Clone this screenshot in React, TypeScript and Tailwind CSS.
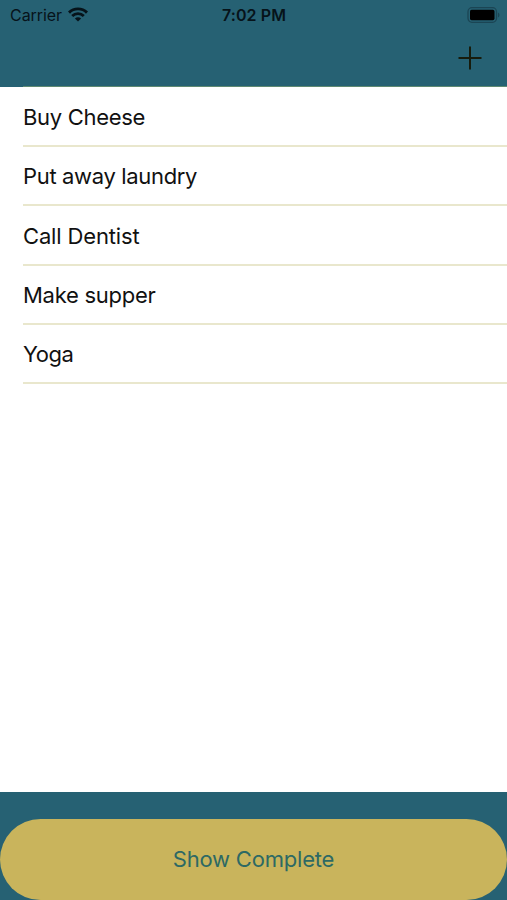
const todos = [
  { title: "Buy Cheese", row: "h-[60px]", tracking: "tracking-[-0.3px]" },
  { title: "Put away laundry", row: "h-[59px]", tracking: "tracking-[-0.34px]" },
  { title: "Call Dentist", row: "h-[60px]", tracking: "tracking-[-0.15px]" },
  { title: "Make supper", row: "h-[59px]", tracking: "tracking-[-0.27px]" },
  { title: "Yoga", row: "h-[59px]", tracking: "tracking-[-0.5px]" },
];

function WifiIcon() {
  return (
    <svg className="-mt-px" width="20" height="15" viewBox="0 0 20 15" fill="none" stroke="#06131a" strokeWidth="2.9">
      <path d="M1 5.6C6 .6 14 .6 19 5.6" />
      <path d="M4.2 9C7.5 5.8 12.5 5.8 15.8 9" />
      <path d="M10 14.6 6.9 11.5C8.7 9.9 11.3 9.9 13.1 11.5Z" fill="#06131a" stroke="none" />
    </svg>
  );
}

function BatteryIcon() {
  return (
    <svg className="-mt-px" width="33" height="16" viewBox="0 0 33 16">
      <rect x="1" y="0.7" width="28.5" height="14.6" rx="4" fill="none" stroke="#1b4554" strokeWidth="1.3" />
      <rect x="3" y="2.8" width="24.5" height="10.4" rx="1.6" fill="#000" />
      <path d="M31 5.5q1.5.8 1.5 2.5t-1.5 2.5z" fill="#1b4554" />
    </svg>
  );
}

export default function App() {
  return (
    <div className="flex h-[900px] w-[507px] flex-col overflow-hidden bg-white font-['Inter','Liberation_Sans',sans-serif]">
      <header className="h-[87px] bg-[#266173] text-[#06131a]">
        <div className="grid h-[29px] grid-cols-3 items-center pr-[7px] pl-[10px]">
          <div className="flex items-center gap-[6px]">
            <span className="pt-px text-[16px] leading-[29px] tracking-[-0.05px]">Carrier</span>
            <WifiIcon />
          </div>
          <span className="pt-px pr-[2px] text-center text-[16px] leading-[29px] font-semibold tracking-[0.1px] whitespace-nowrap">7:02 PM</span>
          <div className="flex justify-end">
            <BatteryIcon />
          </div>
        </div>
        <div className="flex h-[58px] justify-end pr-[25px]">
          <button aria-label="Add" className="h-[58px] w-6">
            <svg width="24" height="58" viewBox="0 0 24 58" stroke="#171c0c" strokeWidth="2">
              <path d="M0.5 29H23.5M12 17.5V40.5" />
            </svg>
          </button>
        </div>
      </header>
      <main className="h-[705px]">
        <ul className="-mt-px ml-[23px] border-t border-[#5f8a72]">
          {todos.map((todo) => (
            <li key={todo.title} className={`${todo.row} ${todo.tracking} flex items-center border-b-2 border-[#e9e7cd] pt-[2px] text-[22px] text-[#111]`}>
              {todo.title}
            </li>
          ))}
        </ul>
      </main>
      <footer className="h-[108px] bg-[#266173] pt-[27px]">
        <button className="h-[81px] w-full rounded-full bg-[#c9b45c] text-[22px] tracking-[-0.2px] text-[#2d6964]">Show Complete</button>
      </footer>
    </div>
  );
}
